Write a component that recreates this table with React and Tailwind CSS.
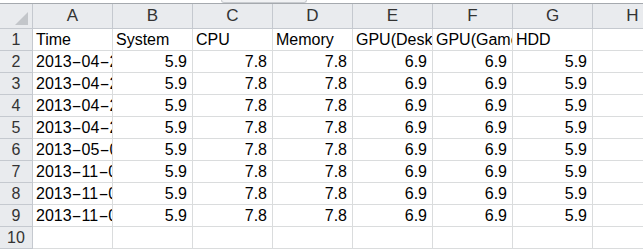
import React from "react";

const cols = ["A", "B", "C", "D", "E", "F", "G", "H"];
const header = ["Time", "System", "CPU", "Memory", "GPU(Desktop)", "GPU(Game)", "HDD", ""];
const dates = [
  "2013-04-21",
  "2013-04-22",
  "2013-04-23",
  "2013-04-24",
  "2013-05-01",
  "2013-11-01",
  "2013-11-02",
  "2013-11-03",
];
const values = ["5.9", "7.8", "7.8", "6.9", "6.9", "5.9"];

const Cell = ({ children, right }) => (
  <div
    className={`h-[22px] border-r border-b border-[#dadcdd] bg-white overflow-hidden whitespace-nowrap flex items-end pb-[1px] text-[16px] leading-[19px] text-black ${
      right ? "justify-end pr-[5px]" : "pl-[3px]"
    }`}
  >
    {children}
  </div>
);

// the sheet's font draws a wide dash, so stretch the hyphen in its own box
const DateText = ({ value }) => (
  <span>
    {value.split("-").map((part, i) => (
      <React.Fragment key={i}>
        {i > 0 && (
          <span className="inline-block w-[10px] text-center">
            <span className="inline-block scale-x-[1.9]">-</span>
          </span>
        )}
        {part}
      </React.Fragment>
    ))}
  </span>
);

const RowHead = ({ children }) => (
  <div className="h-[22px] border-r border-b border-[#c5c9cf] bg-[#e9ebee] flex items-center justify-center text-[16px] text-[#333]">
    {children}
  </div>
);

export default function App() {
  return (
    <div
      className="w-[643px] h-[252px] overflow-hidden bg-white"
      style={{ fontFamily: '"Liberation Sans", Arial, sans-serif' }}
    >
      {/* formula bar remains */}
      <div className="relative h-[4px] border-b border-[#a5a9ae] bg-white">
        <div className="absolute left-[221px] top-0 w-[86px] h-[3px] rounded-b-[6px] border border-t-0 border-[#c9ccd0] bg-[#f1f2f4]" />
      </div>

      <div className="grid grid-cols-[33px_repeat(8,80px)]">
        {/* column headers */}
        <div className="relative h-[25px] border-r border-b border-[#c5c9cf] bg-[#e9ebee]">
          <div className="absolute right-[4px] bottom-[3px] w-0 h-0 border-l-[13px] border-l-transparent border-b-[13px] border-b-[#c3c6ca]" />
        </div>
        {cols.map((c) => (
          <div
            key={c}
            className="h-[25px] border-r border-b border-[#c5c9cf] bg-[#e9ebee] flex items-center justify-center text-[17px] text-[#333]"
          >
            {c}
          </div>
        ))}

        {/* row 1 */}
        <RowHead>1</RowHead>
        {header.map((h, i) => (
          <Cell key={i}>{h}</Cell>
        ))}

        {/* data rows */}
        {dates.map((d, r) => (
          <React.Fragment key={r}>
            <RowHead>{r + 2}</RowHead>
            <Cell>
              <DateText value={d} />
            </Cell>
            {values.map((v, i) => (
              <Cell key={i} right>
                {v}
              </Cell>
            ))}
            <Cell />
          </React.Fragment>
        ))}

        {/* row 10 */}
        <RowHead>10</RowHead>
        {cols.map((c) => (
          <Cell key={c} />
        ))}
      </div>
    </div>
  );
}
